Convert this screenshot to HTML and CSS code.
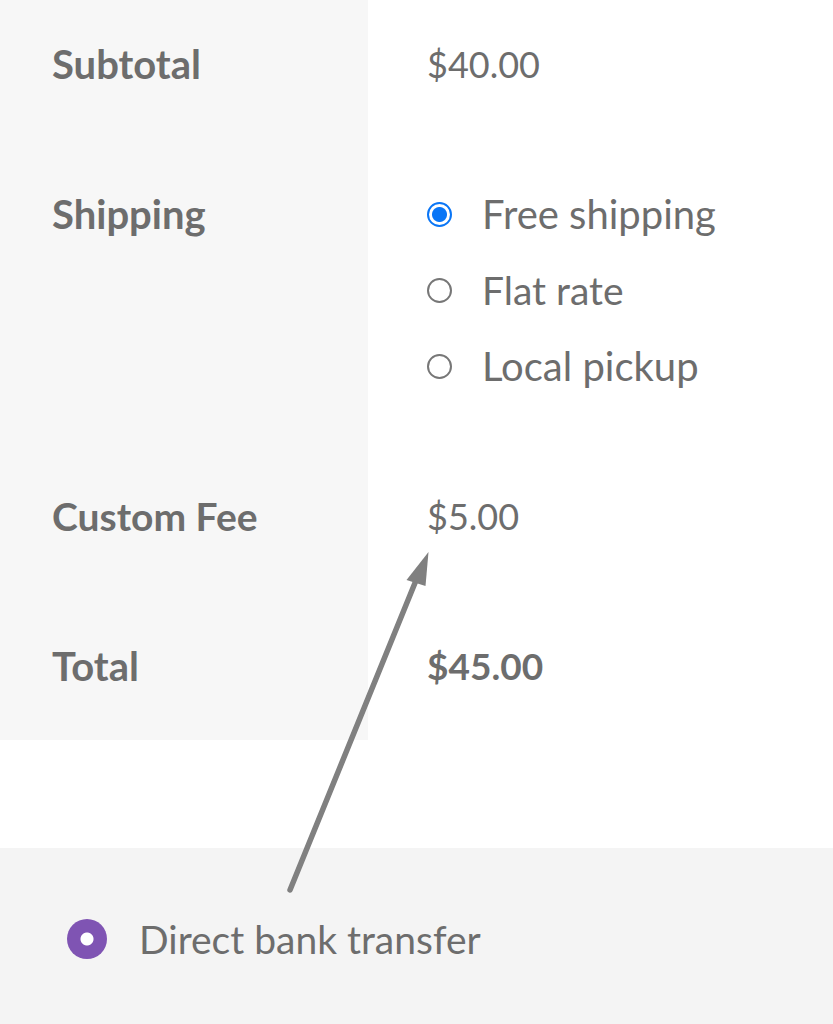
FILE: index.html
```html
<!DOCTYPE html>
<html>
<head>
<meta charset="utf-8">
<link rel="stylesheet" href="styles.css">
</head>
<body>
<div class="page">
  <div class="totals">
    <div class="row row-first">
      <div class="label">Subtotal</div>
      <div class="value amount">$40.00</div>
    </div>
    <div class="row">
      <div class="label">Shipping</div>
      <div class="value">
        <ul class="methods">
          <li><span class="radio checked"></span>Free shipping</li>
          <li><span class="radio"></span>Flat rate</li>
          <li><span class="radio"></span>Local pickup</li>
        </ul>
      </div>
    </div>
    <div class="row">
      <div class="label label-narrow">Custom Fee</div>
      <div class="value amount">$5.00</div>
    </div>
    <div class="row row-last">
      <div class="label">Total</div>
      <div class="value amount strong">$45.00</div>
    </div>
  </div>
  <div class="spacer"></div>
  <div class="payment">
    <div class="pay-option"><span class="pay-radio"></span>Direct bank transfer</div>
  </div>
  <svg class="arrow" width="833" height="1024" viewBox="0 0 833 1024">
    <line x1="290" y1="890" x2="417" y2="578" stroke="#808080" stroke-width="5.5" stroke-linecap="round"/>
    <polygon points="428.5,552 406.5,580 425.5,586" fill="#808080"/>
  </svg>
</div>
</body>
</html>
```
FILE: styles.css
```css
html, body {
  margin: 0;
  padding: 0;
  background: #ffffff;
}
body {
  font-family: Lato, "Liberation Sans", sans-serif;
  color: #6d6d6d;
  font-size: 40px;
}
.page {
  position: relative;
  width: 833px;
  height: 1024px;
  overflow: hidden;
}
.totals {
  display: grid;
  grid-template-columns: 368px 1fr;
}
.row {
  display: contents;
}
.label {
  background: #f7f7f7;
  padding: 50px 0 50px 52px;
  line-height: 50px;
  font-weight: 700;
  font-size: 40px;
}
.label-narrow {
  font-size: 39px;
}
.value {
  padding: 50px 0 50px 59px;
  line-height: 50px;
}
.amount {
  font-size: 36px;
}
.amount.strong {
  font-size: 37px;
}
.row-first .label,
.row-first .value {
  padding-top: 39px;
}
.row-last .label,
.row-last .value {
  padding-bottom: 49px;
}
.strong {
  font-weight: 700;
}
.methods {
  list-style: none;
  margin: 0;
  padding: 0;
}
.methods li {
  display: flex;
  align-items: center;
  gap: 30px;
  height: 50px;
}
.methods li:nth-child(2) {
  font-size: 39px;
}
.methods li + li {
  margin-top: 26px;
}
.radio {
  width: 25px;
  height: 25px;
  border: 2px solid #777777;
  border-radius: 50%;
  box-sizing: border-box;
  flex: none;
  background: #ffffff;
}
.radio.checked {
  border: 2.5px solid #0a76f6;
  background: radial-gradient(circle, #0a76f6 0 7px, #ffffff 8px);
}
.spacer {
  height: 108px;
}
.payment {
  background: #f4f4f4;
  height: 176px;
  padding: 66px 0 0 67px;
  box-sizing: border-box;
}
.pay-option {
  display: flex;
  align-items: center;
  gap: 32px;
  line-height: 50px;
  font-size: 39px;
}
.pay-radio {
  width: 40px;
  height: 40px;
  border-radius: 50%;
  background: radial-gradient(circle, #ffffff 0 6px, #7f54b3 7px);
  flex: none;
}
.arrow {
  position: absolute;
  left: 0;
  top: 0;
  pointer-events: none;
}
```
